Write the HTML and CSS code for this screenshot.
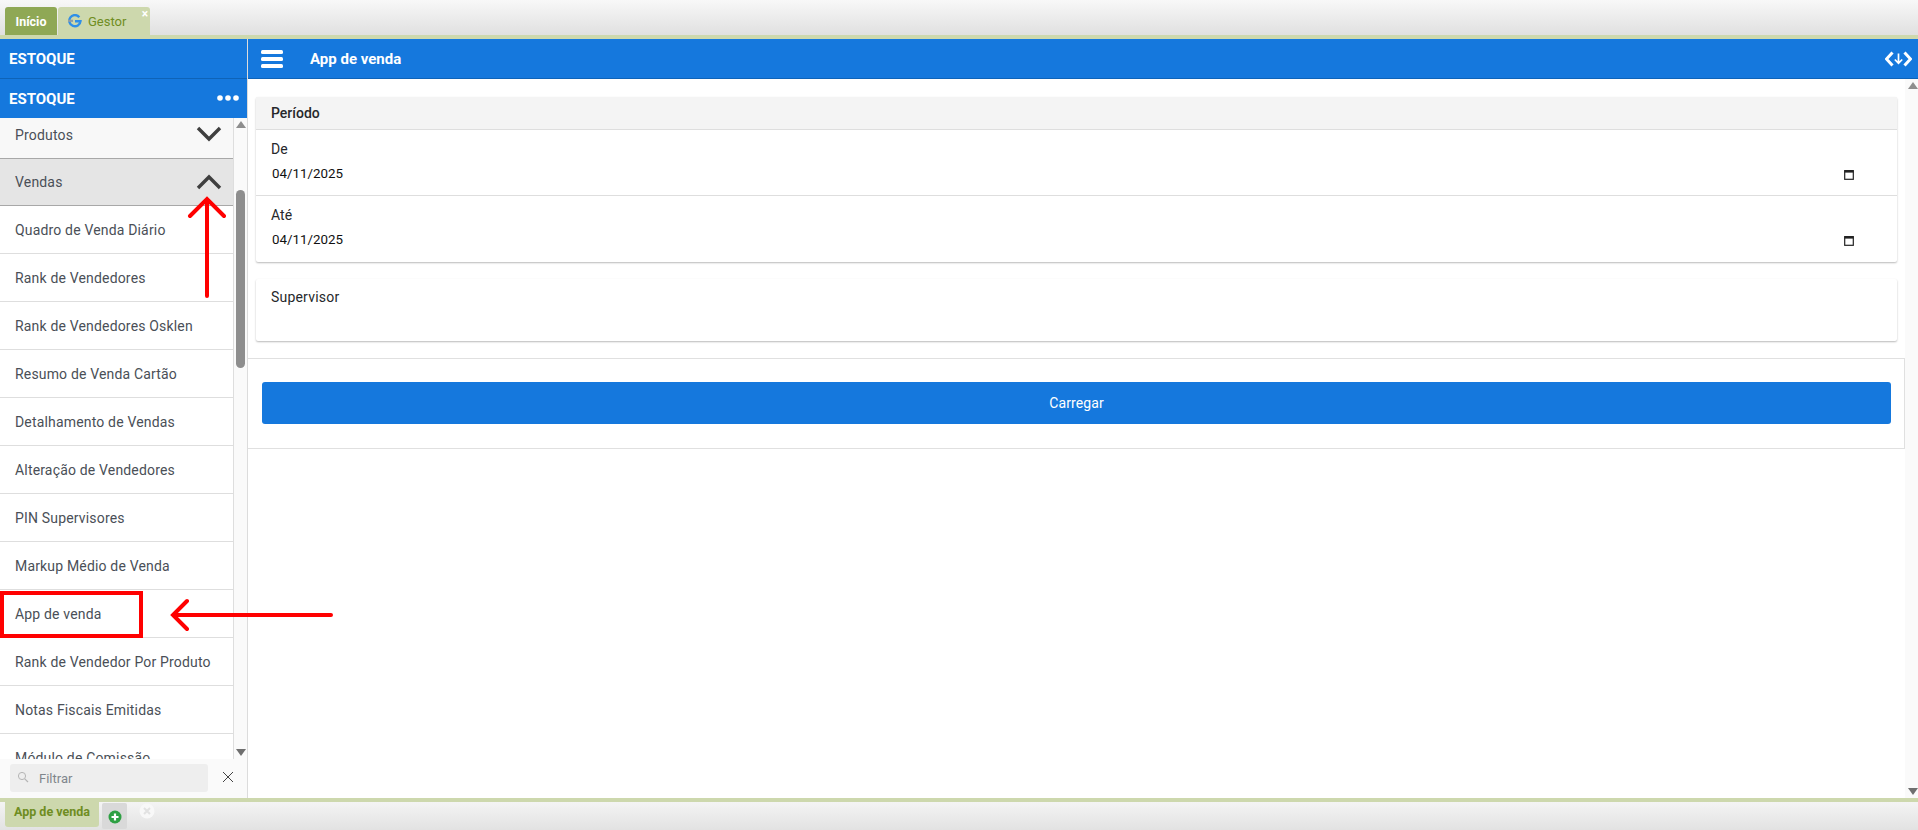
FILE: index.html
```html
<!DOCTYPE html>
<html lang="pt-BR">
<head>
<meta charset="utf-8">
<title>App de venda</title>
<link rel="stylesheet" href="styles.css">
</head>
<body>
<div class="topbar">
  <div class="tab tab-home">Início</div>
  <div class="tab tab-gestor">
    <svg class="g-logo" viewBox="0 0 14 14" width="14" height="14"><path d="M11.300 3.200A5.600 5.600 0 1 0 12.500 7.200H7" fill="none" stroke="#2f8fe8" stroke-width="2.400"/><path d="M0 6.800H5" fill="none" stroke="#8f9ea6" stroke-width="2.200"/></svg>
    <span>Gestor</span>
    <span class="tab-close">×</span>
  </div>
</div>
<div class="app">
  <aside class="sidebar">
    <div class="side-head side-head-1">ESTOQUE</div>
    <div class="side-head side-head-2"><span>ESTOQUE</span>
      <svg viewBox="0 0 22 6" width="22" height="6"><circle cx="3" cy="3" r="2.800" fill="#fff"/><circle cx="11" cy="3" r="2.800" fill="#fff"/><circle cx="19" cy="3" r="2.800" fill="#fff"/></svg>
    </div>
    <div class="side-body">
      <div class="menu">
        <div class="group group-closed"><span>Produtos</span>
          <svg viewBox="0 0 26 16" width="26" height="16"><path d="M2 2l11 11L24 2" fill="none" stroke="#3f3f3f" stroke-width="3.400"/></svg>
        </div>
        <div class="group group-open"><span>Vendas</span>
          <svg viewBox="0 0 26 16" width="26" height="16"><path d="M2 14L13 3l11 11" fill="none" stroke="#3f3f3f" stroke-width="3.400"/></svg>
        </div>
        <div class="item">Quadro de Venda Diário</div>
        <div class="item">Rank de Vendedores</div>
        <div class="item">Rank de Vendedores Osklen</div>
        <div class="item">Resumo de Venda Cartão</div>
        <div class="item">Detalhamento de Vendas</div>
        <div class="item">Alteração de Vendedores</div>
        <div class="item">PIN Supervisores</div>
        <div class="item">Markup Médio de Venda</div>
        <div class="item">App de venda</div>
        <div class="item">Rank de Vendedor Por Produto</div>
        <div class="item">Notas Fiscais Emitidas</div>
        <div class="item">Módulo de Comissão</div>
      </div>
      <div class="scroll scroll-side">
        <i class="arrow-up"></i>
        <div class="thumb-wrap"><div class="thumb"></div></div>
        <i class="arrow-down"></i>
      </div>
    </div>
    <div class="filter">
      <div class="filter-box">
        <svg viewBox="0 0 12 12" width="12" height="12"><circle cx="5" cy="5" r="3.600" fill="none" stroke="#b5b5b5" stroke-width="1"/><path d="M7.800 7.800L11 11" stroke="#b5b5b5" stroke-width="1.200"/></svg>
        <span>Filtrar</span>
      </div>
      <svg class="filter-x" viewBox="0 0 12 12" width="12" height="12"><path d="M1 1l10 10M11 1L1 11" stroke="#444" stroke-width="1"/></svg>
    </div>
  </aside>
  <main class="main">
    <header class="main-head">
      <svg class="burger" viewBox="0 0 22 18" width="22" height="18"><rect y="0" width="22" height="4" rx="1.500" fill="#fff"/><rect y="7" width="22" height="4" rx="1.500" fill="#fff"/><rect y="14" width="22" height="4" rx="1.500" fill="#fff"/></svg>
      <h1>App de venda</h1>
      <svg class="code-ico" viewBox="0 0 27 16" width="27" height="16"><path d="M7.500 1.500L1.500 8l6 6.500M19.500 1.500l6 6.500-6 6.500" fill="none" stroke="#fff" stroke-width="3"/><path d="M13.500 2.500v9.500M9.800 8.500l3.700 3.700 3.700-3.700" fill="none" stroke="#fff" stroke-width="1.700"/></svg>
    </header>
    <div class="main-body">
      <div class="content">
        <section class="card card-period">
          <div class="card-title">Período</div>
          <div class="field">
            <label>De</label>
            <div class="date"><span>04/11/2025</span><svg viewBox="0 0 10 11" width="10" height="11"><rect x="0.700" y="1.700" width="8.600" height="8.600" fill="none" stroke="#222" stroke-width="1.200"/><rect x="0.500" y="1" width="9" height="2.600" fill="#222"/></svg></div>
          </div>
          <div class="field">
            <label>Até</label>
            <div class="date"><span>04/11/2025</span><svg viewBox="0 0 10 11" width="10" height="11"><rect x="0.700" y="1.700" width="8.600" height="8.600" fill="none" stroke="#222" stroke-width="1.200"/><rect x="0.500" y="1" width="9" height="2.600" fill="#222"/></svg></div>
          </div>
        </section>
        <section class="card card-super"><label>Supervisor</label></section>
        <div class="panel"><button class="load" type="button">Carregar</button></div>
      </div>
      <div class="scroll scroll-main">
        <i class="arrow-up"></i>
        <i class="arrow-down"></i>
      </div>
    </div>
  </main>
</div>
<footer class="bottombar">
  <div class="btab">App de venda</div>
  <div class="badd"><svg viewBox="0 0 14 14" width="14" height="14"><circle cx="7" cy="7" r="6.500" fill="#2ea043"/><path d="M7 3.500v7M3.500 7h7" stroke="#fff" stroke-width="2.200"/></svg></div>
  <svg class="bclose" viewBox="0 0 16 16" width="16" height="16"><circle cx="8" cy="8" r="7.500" fill="#f8f8f8"/><path d="M5 5l6 6M11 5l-6 6" stroke="#e2e2e2" stroke-width="2"/></svg>
</footer>
<svg class="marks" viewBox="0 0 1918 830" width="1918" height="830">
  <rect x="2" y="593" width="139" height="43" fill="none" stroke="#f00" stroke-width="4"/>
  <path d="M331 615H174M187 601l-14 14 14 14" fill="none" stroke="#f00" stroke-width="4" stroke-linecap="round"/>
  <path d="M207 296V201M190 216l17-17 17 17" fill="none" stroke="#f00" stroke-width="4" stroke-linecap="round"/>
</svg>
</body>
</html>
```
FILE: styles.css
```css
* { box-sizing: border-box; }
html, body { margin: 0; height: 100%; overflow: hidden; }
body { width: 1918px; height: 830px; font-family: Roboto, "Liberation Sans", sans-serif; font-size: 14px; background: #fff; display: flex; flex-direction: column; position: relative; }

.topbar { height: 39px; flex: none; display: flex; align-items: flex-end; gap: 1px; padding: 7px 0 0 5px; border-bottom: 4px solid #cdd8ad; background: linear-gradient(#f8f8f8, #e0e0e0); }
.tab { height: 28px; border-radius: 3px 3px 0 0; font-size: 12.500px; display: flex; align-items: center; position: relative; }
.tab-home { width: 52px; justify-content: center; background: #8fa855; color: #fff; font-weight: 700; }
.tab-gestor { width: 92px; background: #cdd8ad; color: #6f8d22; padding-left: 10px; gap: 6px; font-size: 13px; }
.tab-close { position: absolute; right: 2px; top: 0; color: #fff; font-size: 12px; line-height: 14px; font-weight: 700; }

.app { flex: 1; min-height: 0; display: flex; }
.sidebar { width: 248px; flex: none; display: flex; flex-direction: column; border-right: 1px solid #dcdcdc; }
.side-head { background: #1578dd; color: #fff; font-weight: 700; font-size: 15px; display: flex; align-items: center; justify-content: space-between; padding: 0 8px 0 9px; }
.side-head-1 { height: 40px; border-bottom: 1px solid #0e63b8; }
.side-head-2 { height: 39px; }
.side-head-2 svg { margin-top: -2px; }
.side-body { flex: 1; min-height: 0; display: flex; }
.menu { flex: 1; min-width: 0; overflow: hidden; color: #4a4f57; letter-spacing: .17px; }
.group { display: flex; align-items: center; justify-content: space-between; padding: 0 11px 0 15px; border-bottom: 1px solid #a8a8a8; }
.group-closed { height: 41px; background: #f8f8f8; padding-bottom: 8px; }
.group-closed span { margin-top: 1px; }
.group-open { height: 47px; background: #e5e5e5; padding-bottom: 1px; }
.group-open span { margin-top: 1px; }
.item { height: 48px; line-height: 49px; padding-left: 15px; border-bottom: 1px solid #dedede; white-space: nowrap; }
.scroll { flex: none; background: #fafafa; display: flex; flex-direction: column; align-items: center; justify-content: space-between; position: relative; }
.scroll-side { width: 14px; border-left: 1px solid #dedede; padding: 3px 0 3px; }
.thumb-wrap { flex: 1; width: 100%; display: flex; justify-content: center; }
.thumb { width: 9px; height: 178px; margin-top: 62px; background: #8e8e8e; border-radius: 5px; }
.arrow-up { width: 0; height: 0; border: 5px solid transparent; border-top: 0; border-bottom: 7px solid #8e8e8e; }
.arrow-down { width: 0; height: 0; border: 5px solid transparent; border-bottom: 0; border-top: 7px solid #6f6f6f; }

.filter { height: 39px; flex: none; background: #fafafa; display: flex; align-items: center; padding: 0 13px 1px 10px; justify-content: space-between; }
.filter-box { width: 198px; height: 28px; background: #eeeeee; border-radius: 3px; display: flex; align-items: center; gap: 10px; padding-left: 7px; color: #80868c; font-size: 13px; }
.filter-box svg { margin-top: -3px; }
.filter-x { margin-top: -2px; }

.main { flex: 1; min-width: 0; display: flex; flex-direction: column; }
.main-head { height: 40px; flex: none; background: #1578dd; border-bottom: 1px solid #0e63b8; display: flex; align-items: center; padding: 0 6px 0 13px; color: #fff; }
.main-head h1 { margin: 0 0 0 27px; font-size: 15px; font-weight: 700; flex: 1; }
.main-body { flex: 1; min-height: 0; display: flex; }
.content { flex: 1; min-width: 0; display: flex; flex-direction: column; padding-top: 18px; }
.scroll-main { width: 13px; padding: 3px 0 3px 3px; }

.card { margin: 0 8px; background: #fff; border-radius: 2px; box-shadow: 0 1px 2px rgba(0,0,0,.28); color: #26282b; }
.card-title { height: 33px; line-height: 33px; padding-left: 15px; background: #f4f4f4; border-bottom: 1px solid #dedede; font-weight: 500; }
.field { height: 66px; padding: 11px 43px 0 15px; border-bottom: 1px solid #dedede; }
.field:last-child { height: 66px; border-bottom: 0; }
.field label, .card-super label { display: block; line-height: 16px; letter-spacing: .1px; }
.date { display: flex; align-items: center; justify-content: space-between; margin-top: 9px; padding-left: 1px; font-size: 13.333px; color: #111; line-height: 16px; }
.card-period { height: 165px; }
.card-super { height: 62px; margin-top: 17px; padding: 10px 15px; }
.card-super label { letter-spacing: .2px; }
.panel { margin-top: 17px; height: 91px; border: 1px solid #e0e0e0; border-left: 0; padding: 23px 13px 0 14px; }
.load { display: block; width: 100%; height: 42px; border: 0; border-radius: 3px; background: #1578dd; color: #fff; font-family: Roboto, "Liberation Sans", sans-serif; font-size: 14px; letter-spacing: .1px; }

.bottombar { height: 32px; flex: none; border-top: 4px solid #cdd8ad; background: linear-gradient(#f4f4f4, #e2e2e2); display: flex; align-items: flex-start; padding-left: 5px; position: relative; }
.btab { width: 94px; height: 25px; line-height: 20px; background: #cdd8ad; color: #6f8d22; font-size: 12.500px; font-weight: 700; text-align: center; border-radius: 0 0 3px 3px; }
.badd { width: 25px; height: 26px; margin: 1px 0 0 3px; background: #d9d9d9; border-radius: 2px; display: flex; align-items: center; justify-content: center; padding-top: 2px; }
.bclose { margin: 1px 0 0 12px; }
.marks { position: absolute; left: 0; top: 0; pointer-events: none; }
```
